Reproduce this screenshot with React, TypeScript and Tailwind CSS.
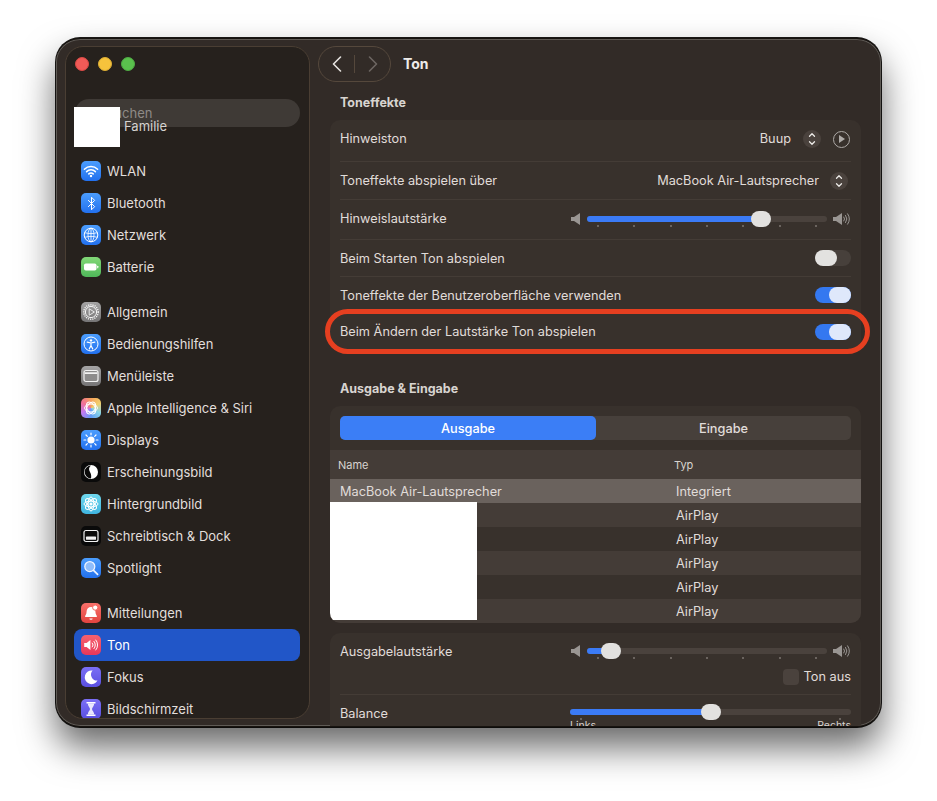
import React from "react";
import { Bluetooth, ChevronUp, ChevronDown } from "lucide-react";

const Tile = ({ bg, children }: { bg: string; children: React.ReactNode }) => (
  <div className={`w-[20px] h-[20px] rounded-[5px] flex items-center justify-center shrink-0 overflow-hidden ${bg}`}>{children}</div>
);
const V = ({ children, size = 20 }: { children: React.ReactNode; size?: number }) => (
  <svg width={size} height={size} viewBox="0 0 20 20" fill="none">{children}</svg>
);

const blue = "bg-gradient-to-b from-[#4b9dfd] to-[#2270ee]";
const grey = "bg-gradient-to-b from-[#a5a4a4] to-[#767576]";
const indigo = "bg-gradient-to-b from-[#7b6ff5] to-[#5a4fe0]";

const icons: Record<string, React.ReactNode> = {
  WLAN: (
    <Tile bg={blue}>
      <V>
        <path d="M3.4 8.2a9.4 9.4 0 0 1 13.2 0M5.6 10.6a6.2 6.2 0 0 1 8.8 0M7.8 12.9a3.1 3.1 0 0 1 4.4 0" stroke="#fff" strokeWidth="1.5" strokeLinecap="round" />
        <circle cx="10" cy="15" r="1.2" fill="#fff" />
      </V>
    </Tile>
  ),
  Bluetooth: <Tile bg={blue}><Bluetooth size={15} color="#fff" strokeWidth={1.6} /></Tile>,
  Netzwerk: (
    <Tile bg={blue}>
      <V>
        <circle cx="10" cy="10" r="6.8" stroke="#fff" strokeWidth="1" />
        <ellipse cx="10" cy="10" rx="3" ry="6.8" stroke="#fff" strokeWidth=".8" />
        <path d="M3.6 7.6c4 1.3 8.8 1.3 12.8 0M3.6 12.4c4-1.3 8.8-1.3 12.8 0M10 3.2v13.6" stroke="#fff" strokeWidth=".8" />
      </V>
    </Tile>
  ),
  Batterie: (
    <Tile bg="bg-gradient-to-b from-[#82d877] to-[#4fb85a]">
      <V>
        <rect x="3" y="6.5" width="12.5" height="7" rx="1.8" fill="#fff" />
        <rect x="16.2" y="8.7" width="1.1" height="2.6" rx=".5" fill="#fff" />
      </V>
    </Tile>
  ),
  Allgemein: (
    <Tile bg={grey}>
      <V>
        <circle cx="10" cy="10" r="7.2" stroke="#f4f4f4" strokeWidth="1.4" strokeDasharray="1.2 1" />
        <circle cx="10" cy="10" r="5.6" stroke="#f4f4f4" strokeWidth="1" />
        <path d="M8.2 6.8 13.4 10l-5.2 3.2Z" stroke="#f4f4f4" strokeWidth=".9" strokeLinejoin="round" />
      </V>
    </Tile>
  ),
  Bedienungshilfen: (
    <Tile bg={blue}>
      <V>
        <circle cx="10" cy="10" r="7" stroke="#fff" strokeWidth="1" />
        <circle cx="10" cy="6.4" r="1.2" fill="#fff" />
        <path d="M6.2 8.2 10 9l3.8-.8M10 9v2.6M10 11.6l-1.8 3.4M10 11.6l1.8 3.4" stroke="#fff" strokeWidth="1.2" strokeLinecap="round" />
      </V>
    </Tile>
  ),
  "Menüleiste": (
    <Tile bg={grey}>
      <V>
        <rect x="3" y="4.5" width="14" height="11" rx="2" fill="#8d8c8c" stroke="#f2f2f2" strokeWidth="1.2" />
        <path d="M3.6 7.2h12.8" stroke="#f2f2f2" strokeWidth="1.8" />
      </V>
    </Tile>
  ),
  "Apple Intelligence & Siri": (
    <Tile bg="bg-[conic-gradient(from_0deg,#f6a05a,#f2cf6a,#86d3e8,#5f9bf5,#c07af0,#f0709a,#f6a05a)]">
      <V>
        {[0, 60, 120].map((a) => (
          <ellipse key={a} cx="10" cy="10" rx="6.4" ry="4" stroke="#fff" strokeWidth="1" transform={`rotate(${a} 10 10)`} />
        ))}
      </V>
    </Tile>
  ),
  Displays: (
    <Tile bg={blue}>
      <V>
        <circle cx="10" cy="10" r="3.6" fill="#fff" />
        <path d="M10 3v1.8M10 15.2V17M3 10h1.8M15.2 10H17M5 5l1.3 1.3M13.7 13.7 15 15M5 15l1.3-1.3M13.7 6.3 15 5" stroke="#fff" strokeWidth="1.2" strokeLinecap="round" />
      </V>
    </Tile>
  ),
  Erscheinungsbild: (
    <Tile bg="bg-[#0a0a0a]">
      <V>
        <circle cx="10" cy="10" r="7" fill="#fff" />
        <path d="M10 3.6c-2.4 1.6-2.4 4.3-1 6.4 1.4 2.1 1.4 4.8 1 6.4a6.4 6.4 0 0 1 0-12.8Z" fill="#0a0a0a" />
      </V>
    </Tile>
  ),
  Hintergrundbild: (
    <Tile bg="bg-gradient-to-b from-[#6fd8ee] to-[#3fb5e0]">
      <V>
        {[0, 45, 90, 135].map((a) => (
          <ellipse key={a} cx="10" cy="10" rx="7" ry="2.9" stroke="#fff" strokeWidth="1" transform={`rotate(${a} 10 10)`} />
        ))}
        <circle cx="10" cy="10" r="1.6" fill="#fff" />
      </V>
    </Tile>
  ),
  "Schreibtisch & Dock": (
    <Tile bg="bg-[#0a0a0a]">
      <V>
        <rect x="3" y="4.5" width="14" height="11" rx="2" stroke="#f2f2f2" strokeWidth="1.2" />
        <rect x="5" y="10.6" width="10" height="3.2" rx=".6" fill="#f2f2f2" />
      </V>
    </Tile>
  ),
  Spotlight: (
    <Tile bg={blue}>
      <V>
        <circle cx="8.8" cy="8.6" r="5" fill="#8fbdfb" stroke="#eef4ff" strokeWidth="1.3" />
        <path d="m12.6 12.4 4 4" stroke="#eef4ff" strokeWidth="1.7" strokeLinecap="round" />
      </V>
    </Tile>
  ),
  Mitteilungen: (
    <Tile bg="bg-gradient-to-b from-[#f8706a] to-[#e2433f]">
      <V>
        <path d="M10 4a4.4 4.4 0 0 0-4.4 4.4c0 3-1.6 4.2-1.6 5.1 0 .3.2.5.6.5h10.8c.4 0 .6-.2.6-.5 0-.9-1.6-2.1-1.6-5.1A4.4 4.4 0 0 0 10 4Z" fill="#fff" />
        <path d="M8.3 15.4h3.4a1.7 1.3 0 0 1-3.4 0Z" fill="#fff" />
        <circle cx="14.2" cy="4.6" r="2.6" fill="#fff" stroke="#f26a64" strokeWidth="1" />
      </V>
    </Tile>
  ),
  Ton: (
    <Tile bg="bg-gradient-to-b from-[#f6616f] to-[#e8365a]">
      <V>
        <path d="M3.2 8h2.4L9.4 5v10l-3.8-3H3.2Z" fill="#fff" />
        <path d="M11.3 8a3 3 0 0 1 0 4M13 6.4a5.4 5.4 0 0 1 0 7.2M14.8 5a7.6 7.6 0 0 1 0 10" stroke="#fff" strokeWidth="1" strokeLinecap="round" />
      </V>
    </Tile>
  ),
  Fokus: (
    <Tile bg={indigo}>
      <V><path d="M11.6 3.6a6.8 6.8 0 1 0 4.9 10 6 6 0 0 1-4.9-10Z" fill="#fff" /></V>
    </Tile>
  ),
  Bildschirmzeit: (
    <Tile bg={indigo}>
      <V>
        <path d="M5.5 3h9v1.4H5.5ZM5.5 15.6h9V17h-9Z" fill="#fff" />
        <path d="M6.8 4.4h6.4c0 2.8-2.2 4-2.2 5.6s2.2 2.8 2.2 5.6H6.8c0-2.8 2.2-4 2.2-5.6S6.8 7.2 6.8 4.4Z" fill="#fff" fillOpacity=".85" />
      </V>
    </Tile>
  ),
};

const Item = ({ name, active }: { name: string; active?: boolean }) => (
  <div className={`h-[32px] ml-[8px] mr-[9px] px-[7px] flex items-center gap-[6px] rounded-[8px] ${active ? "bg-[#2156c8] text-white" : "text-[#e2dfdc]"}`}>
    {icons[name]}
    <span className="text-[13px] leading-none">{name}</span>
  </div>
);

const Group = ({ names, className = "" }: { names: string[]; className?: string }) => (
  <div className={className}>
    {names.map((n) => <Item key={n} name={n} active={n === "Ton"} />)}
  </div>
);

const Row = ({ h, label, last, children, pb = "", labelPt = "" }: { h: string; label: string; last?: boolean; children?: React.ReactNode; pb?: string; labelPt?: string }) => (
  <div className={`${h} ${pb} mx-[10px] flex items-center justify-between ${last ? "" : "border-b border-[#443c36]"}`}>
    <span className={`${labelPt} text-[12.75px] text-[#e0dcd9]`}>{label}</span>
    {children}
  </div>
);

const Toggle = ({ on }: { on?: boolean }) => (
  <div className={`w-[36px] h-[16px] rounded-full flex ${on ? "bg-[#3478f0] justify-end" : "bg-[#47403b] justify-start"}`}>
    <div className={`w-[22px] h-[16px] rounded-full ${on ? "bg-[#dfe8fb]" : "bg-[#e3e2e0]"}`} />
  </div>
);

const Stepper = () => (
  <div className="w-[18px] h-[18px] rounded-full bg-[#4a423d] flex flex-col items-center justify-center text-[#eeece9]">
    <ChevronUp size={10} strokeWidth={3} className="-mb-[1px]" />
    <ChevronDown size={10} strokeWidth={3} className="-mt-[1px]" />
  </div>
);

const SpeakerLow = () => (
  <svg width="10" height="12" viewBox="0 0 10 12"><path d="M0 4h3l6-4v12L3 8H0Z" fill="#9a9693" /></svg>
);
const SpeakerHigh = () => (
  <svg width="18" height="12" viewBox="0 0 18 12" fill="none">
    <path d="M0 4h3l6-4v12L3 8H0Z" fill="#9a9693" />
    <path d="M10.8 4a3 3 0 0 1 0 4M12.6 2.4a6 6 0 0 1 0 7.2M14.6 .8a9 9 0 0 1 0 10.4" stroke="#9a9693" strokeWidth="1" strokeLinecap="round" />
  </svg>
);

const Slider = ({ width, left }: { width: string; left: number }) => (
  <div className={`${width} relative h-[16px]`}>
    <div className="absolute inset-x-0 top-[5px] h-[6px] rounded-full bg-[#4a423d]" />
    <div className="absolute left-0 top-[5px] h-[6px] rounded-l-full bg-[#3b7bf6]" style={{ width: left + 10 }} />
    <div className="absolute top-0 w-[20px] h-[16px] rounded-full bg-[#e2e1df]" style={{ left }} />
  </div>
);

const Ticks = ({ n }: { n: number }) => (
  <div className="flex justify-between px-[10px] h-[2px] -mt-[2px]">
    {Array.from({ length: n }).map((_, i) => (
      <div key={i} className="w-[2px] h-[2px] bg-[#6b645f]" />
    ))}
  </div>
);

const VolumeSlider = ({ left }: { left: number }) => (
  <div className="flex items-start gap-[6px] w-[280px]">
    <div className="w-[10px] h-[16px] flex items-center"><SpeakerLow /></div>
    <div className="w-[240px]">
      <Slider width="w-[240px]" left={left} />
      <Ticks n={7} />
    </div>
    <div className="h-[16px] flex items-center"><SpeakerHigh /></div>
  </div>
);

const TableRow = ({ name, type, kind }: { name: string; type: string; kind: "sel" | "alt" | "plain" }) => (
  <div className={`h-[24px] pt-[2px] flex items-center text-[12.75px] text-[#e0dcd9] ${kind === "sel" ? "bg-[#6a625d]" : kind === "alt" ? "bg-[#443c37]" : ""}`}>
    <span className="w-[346px] pl-[10px]">{name}</span>
    <span>{type}</span>
  </div>
);

export default function App() {
  return (
    <div className="w-[937px] h-[801px] bg-white pl-[56px] pt-[38px] overflow-hidden [font-family:Inter,'Liberation_Sans',sans-serif]">
      <div className="w-[825px] h-[689px] rounded-[24px] bg-[#322b27] flex overflow-hidden border-y border-[#17130f] shadow-[0_20px_36px_rgba(0,0,0,0.6),0_0_0_1px_#1c1a18,inset_0_0_0_1px_#5f5b56]">
        {/* Sidebar */}
        <div className="relative ml-[9px] mt-[7px] w-[245px] h-[673px] shrink-0 rounded-[18px] border border-[#4a3e33] bg-[#26211d] overflow-hidden">
          <div className="h-[35px] pl-[9px] flex items-center gap-[9px] mt-[-1px]">
            <div className="w-[14px] h-[14px] rounded-full bg-[#f05a57] border border-[#d94a45]" />
            <div className="w-[14px] h-[14px] rounded-full bg-[#f6c33c] border border-[#dcae34]" />
            <div className="w-[14px] h-[14px] rounded-full bg-[#5ac14d] border border-[#4faa44]" />
          </div>
          <div className="mt-[18px] mx-[9px] h-[28px] pt-[2px] rounded-[14px] bg-[#3f3a36] flex items-center pl-[31px] text-[13px] text-[#8f8a86]">Suchen</div>
          <div className="h-[20px] -mt-[11px] pt-[2px] pl-[58px] flex items-center text-[13px] text-[#d6d3d0] relative">
            Familie
            <div className="absolute left-[8px] -top-[9px] w-[46px] h-[40px] bg-white" />
          </div>
          <Group className="mt-[19px]" names={["WLAN", "Bluetooth", "Netzwerk", "Batterie"]} />
          <Group className="mt-[13px]" names={["Allgemein", "Bedienungshilfen", "Menüleiste", "Apple Intelligence & Siri", "Displays", "Erscheinungsbild", "Hintergrundbild", "Schreibtisch & Dock", "Spotlight"]} />
          <Group className="mt-[13px]" names={["Mitteilungen", "Ton", "Fokus", "Bildschirmzeit"]} />
        </div>

        {/* Content */}
        <div className="flex-1 min-w-0">
          <div className="ml-[8px] mt-[7px] h-[36px] flex items-center">
            <div className="w-[73px] h-[36px] rounded-[18px] border border-[#55483c] flex items-center">
              <div className="w-[36px] flex justify-center border-r border-[#55483c] h-[18px] items-center">
                <svg width="10" height="16" viewBox="0 0 10 16" fill="none"><path d="M8.5 1 1.5 8l7 7" stroke="#e6e3e0" strokeWidth="1.6" strokeLinecap="round" strokeLinejoin="round" /></svg>
              </div>
              <div className="flex-1 flex justify-center">
                <svg width="10" height="16" viewBox="0 0 10 16" fill="none"><path d="m1.5 1 7 7-7 7" stroke="#6d6662" strokeWidth="1.6" strokeLinecap="round" strokeLinejoin="round" /></svg>
              </div>
            </div>
            <span className="ml-[12px] pb-[2px] text-[14px] font-bold text-[#eeecea]">Ton</span>
          </div>

          <div className="mx-[20px]">
            <div className="h-[38px] pt-[5px] pl-[10px] flex items-center text-[12.5px] font-bold text-[#d8d4d0]">Toneffekte</div>
            <div className="relative rounded-[10px] bg-[#38312c]">
              <Row h="h-[42px]" pb="pb-[3px]" label="Hinweiston">
                <div className="flex items-center pr-[1px]">
                  <span className="text-[12.75px] text-[#e0dcd9] mr-[12px]">Buup</span>
                  <Stepper />
                  <div className="ml-[12px] w-[17px] h-[17px] rounded-full border-[1.5px] border-[#aeaaa7] flex items-center justify-center">
                    <div className="ml-[1px] w-0 h-0 border-y-[4px] border-y-transparent border-l-[6px] border-l-[#aeaaa7]" />
                  </div>
                </div>
              </Row>
              <Row h="h-[38px]" label="Toneffekte abspielen über">
                <div className="flex items-center pr-[3px]">
                  <span className="text-[12.75px] text-[#e0dcd9] mr-[11px]">MacBook Air-Lautsprecher</span>
                  <Stepper />
                </div>
              </Row>
              <Row h="h-[40px]" pb="pb-[1px]" label="Hinweislautstärke">
                <VolumeSlider left={164} />
              </Row>
              <Row h="h-[37px]" labelPt="pt-[2px]" label="Beim Starten Ton abspielen"><Toggle /></Row>
              <Row h="h-[37px]" labelPt="pt-[2px]" label="Toneffekte der Benutzeroberfläche verwenden"><Toggle on /></Row>
              <Row h="h-[36px]" label="Beim Ändern der Lautstärke Ton abspielen" last><Toggle on /></Row>
              <div className="absolute left-[-5px] right-[-9px] top-[189px] h-[45px] rounded-[23px] border-[5px] border-[#e63f20]" />
            </div>

            <div className="h-[56px] pl-[10px] pb-[7px] flex items-end text-[12.5px] font-bold text-[#d8d4d0]">Ausgabe &amp; Eingabe</div>
            <div className="relative rounded-[10px] bg-[#38312c] overflow-hidden pt-[10px]">
              <div className="mx-[10px] h-[24px] rounded-[5px] bg-[#47403b] flex text-[12.75px] font-medium text-[#e0dcd9]">
                <div className="w-[256px] pt-[2px] rounded-[5px] bg-[#3b7ef6] flex items-center justify-center text-white">Ausgabe</div>
                <div className="flex-1 pt-[2px] flex items-center justify-center">Eingabe</div>
              </div>
              <div className="mt-[10px] h-[29px] pt-[2px] bg-[#443c37] flex items-center text-[11px] text-[#d8d4d0]">
                <span className="w-[344px] pl-[8px]">Name</span>
                <span>Typ</span>
              </div>
              <TableRow name="MacBook Air-Lautsprecher" type="Integriert" kind="sel" />
              <TableRow name="" type="AirPlay" kind="alt" />
              <TableRow name="" type="AirPlay" kind="plain" />
              <TableRow name="" type="AirPlay" kind="alt" />
              <TableRow name="" type="AirPlay" kind="plain" />
              <TableRow name="" type="AirPlay" kind="alt" />
              <div className="absolute left-0 top-[96px] w-[147px] h-[118px] bg-white" />
            </div>

            <div className="mt-[10px] rounded-[10px] bg-[#38312c] h-[120px]">
              <div className="mx-[10px] h-[62px] border-b border-[#443c36] flex justify-between pt-[10px]">
                <span className="text-[12.75px] text-[#e0dcd9] leading-[18px]">Ausgabelautstärke</span>
                <div className="flex flex-col items-end">
                  <VolumeSlider left={14} />
                  <div className="mt-[8px] flex items-center gap-[5px] text-[12.75px] text-[#e0dcd9]">
                    <div className="w-[16px] h-[16px] rounded-[4px] bg-[#4a423d]" />
                    Ton aus
                  </div>
                </div>
              </div>
              <div className="mx-[10px] flex justify-between pt-[9px]">
                <span className="text-[12.75px] text-[#e0dcd9] leading-[20px]">Balance</span>
                <div className="w-[281px]">
                  <Slider width="w-[281px]" left={131} />
                  <Ticks n={2} />
                  <div className="flex justify-between text-[10.5px] leading-[12px] text-[#d8d4d0]">
                    <span>Links</span>
                    <span>Rechts</span>
                  </div>
                </div>
              </div>
            </div>
          </div>
        </div>
      </div>
    </div>
  );
}
